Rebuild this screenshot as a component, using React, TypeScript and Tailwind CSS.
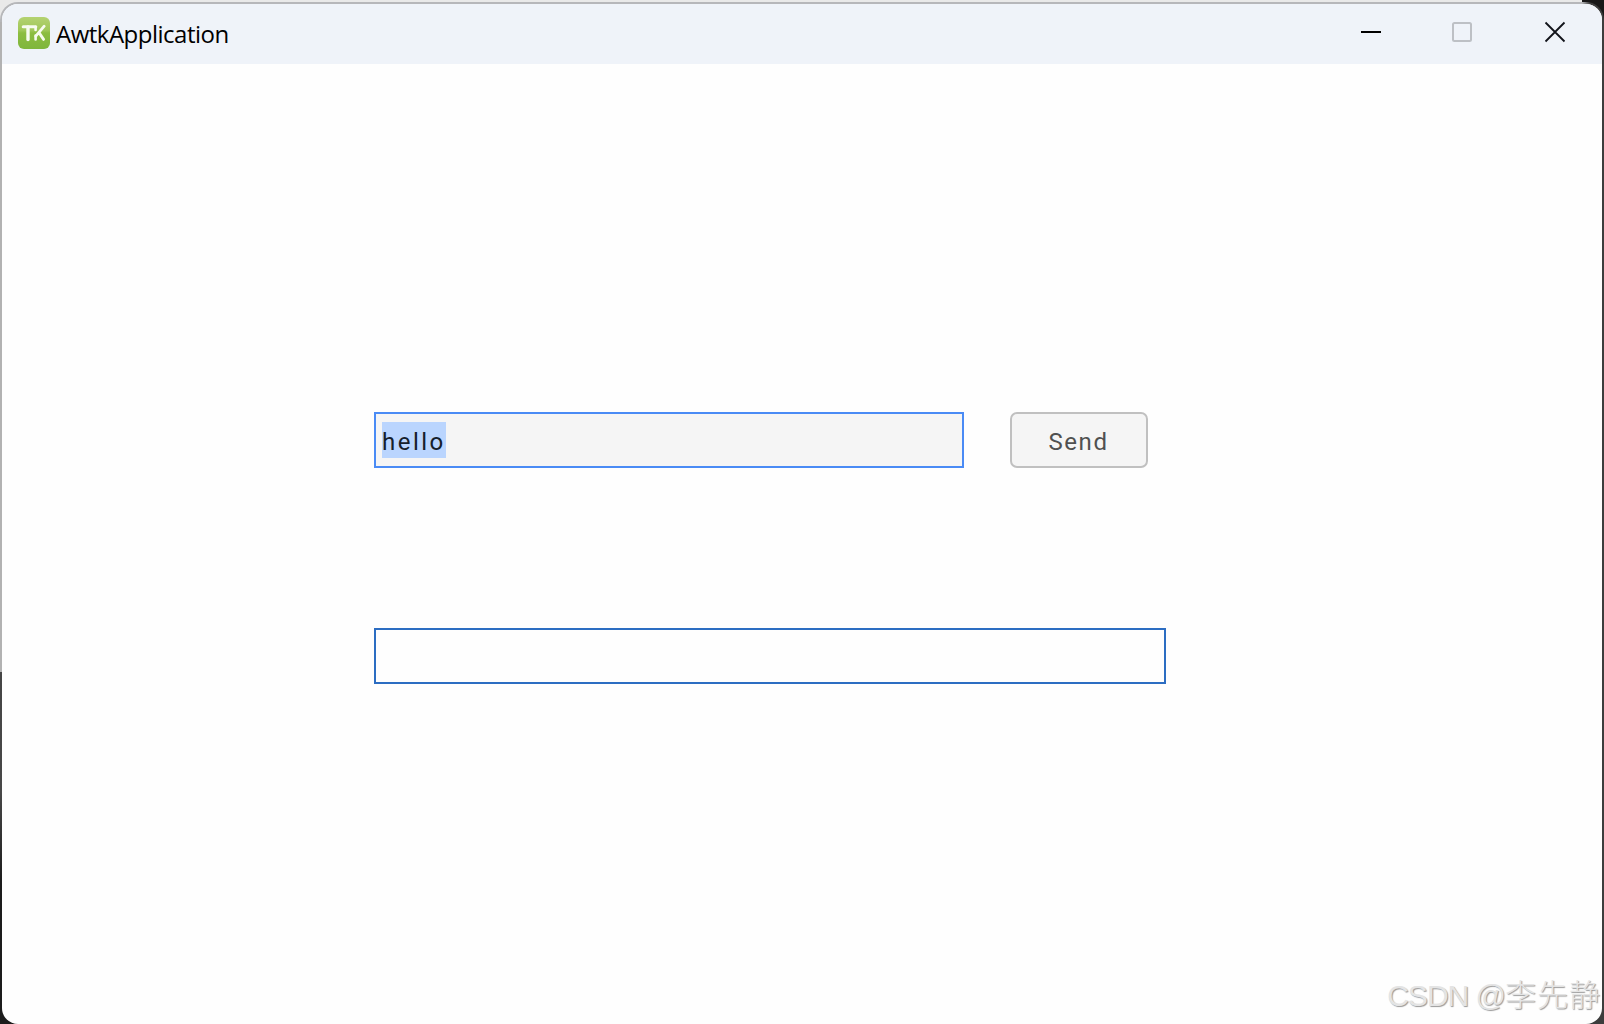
import type { ReactNode } from 'react'

const TITLE = 'AwtkApplication'

function AppIcon() {
  return (
    <svg className="h-8 w-8 shrink-0" viewBox="0 0 32 32">
      <defs>
        <linearGradient id="icon-bg" x1="0" y1="0" x2="0" y2="1">
          <stop offset="0" stopColor="#b4d271" />
          <stop offset="0.42" stopColor="#9fc757" />
          <stop offset="0.5" stopColor="#8cbd40" />
          <stop offset="1" stopColor="#7fb63c" />
        </linearGradient>
      </defs>
      <rect width="32" height="32" rx="6" fill="url(#icon-bg)" />
      <g fill="none" stroke="#f7fbef" strokeLinecap="round" strokeLinejoin="round">
        <path d="M5.2 9.8h12.6" strokeWidth="3" />
        <path d="M10 10v12.6" strokeWidth="3.4" />
        <path d="M17.6 10v3M17.6 18.5v4" strokeWidth="2.6" />
        <path d="M26.2 9.2L17.8 19.2M21 15.6L25.6 22.4" strokeWidth="2.8" />
      </g>
    </svg>
  )
}

function CaptionButton({ label, children }: { label: string; children: ReactNode }) {
  return (
    <button aria-label={label} className="flex w-[92px] items-start justify-center pt-[18px]">
      <svg className="h-5 w-5 overflow-visible" viewBox="0 0 20 20" fill="none">
        {children}
      </svg>
    </button>
  )
}

function TitleBar() {
  return (
    <header className="flex h-[60px] shrink-0 bg-[#eff3f9]">
      <div className="flex flex-1 items-start pt-[13px] pl-4">
        <AppIcon />
        <h1 className="ml-[6px] font-['Open_Sans',sans-serif] text-[24px] leading-[34px] tracking-[-0.5px] text-black">
          {TITLE}
        </h1>
      </div>
      <div className="flex pr-[1px]">
        <CaptionButton label="Minimize">
          <path d="M0 10h20" stroke="#000" strokeWidth="2" />
        </CaptionButton>
        <CaptionButton label="Maximize">
          <rect x="0" y="1" width="18" height="18" rx="1.5" stroke="#bdc0c5" strokeWidth="2" />
        </CaptionButton>
        <CaptionButton label="Close">
          <path d="M0.5 0.5l19 19M19.5 0.5l-19 19" stroke="#11131a" strokeWidth="1.8" />
        </CaptionButton>
      </div>
    </header>
  )
}

export default function App() {
  return (
    <div className="flex h-[1024px] w-[1604px] flex-col overflow-hidden bg-[linear-gradient(to_right,#e9e9e9_1582px,#171717_1582px)] pt-[2px]">
      <div className="flex-1 bg-[linear-gradient(transparent_50%,#151515_50%)]">
        <div className="h-full rounded-t-[18px] bg-[linear-gradient(to_right,#b6b7ba_1582px,#3d3d3d_1590px)]">
          <div className="h-full bg-[linear-gradient(to_right,transparent_50%,#3d3d3d_50%),linear-gradient(#b2b2b2_650px,#454545_650px,#484848_770px,#1c1c1c_860px)] bg-[length:100%_100%] bg-[position:0_20px] bg-no-repeat px-[2px] pt-[2px]">
            <div className="flex h-full flex-col overflow-hidden rounded-2xl bg-[#fefefe]">
              <TitleBar />
              <main className="flex flex-1 flex-col pt-[348px] pl-[372px] font-[Roboto,sans-serif] text-[24px]">
                <div className="flex gap-[46px]">
                  <div className="flex h-14 w-[590px] items-center border-2 border-[#4a8bf5] bg-[#f5f5f5] pl-[6px]">
                    <span className="h-9 w-16 bg-[#bad5fe] leading-10 tracking-[2.5px] text-[#15202b]">
                      hello
                    </span>
                  </div>
                  <button className="h-14 w-[138px] rounded-[7px] border-2 border-[#c0c0c0] bg-[#f5f5f5] pt-1 pr-[1px] tracking-[1.6px] text-[#505050]">
                    Send
                  </button>
                </div>
                <div className="mt-40 h-14 w-[792px] border-2 border-[#2c6dc2]" />
                <div className="mt-auto flex justify-end pr-[1px] pb-[8px] font-['Liberation_Sans','Noto_Sans_CJK_SC',sans-serif] text-[31px] leading-10 font-light whitespace-pre text-[#e4e4e4] [text-shadow:1px_1px_1px_#999999]">
                  <span className="text-[30px] tracking-[-1px]">CSDN @</span>
                  <span className="tracking-[1px]">李先静</span>
                </div>
              </main>
            </div>
          </div>
        </div>
      </div>
    </div>
  )
}
